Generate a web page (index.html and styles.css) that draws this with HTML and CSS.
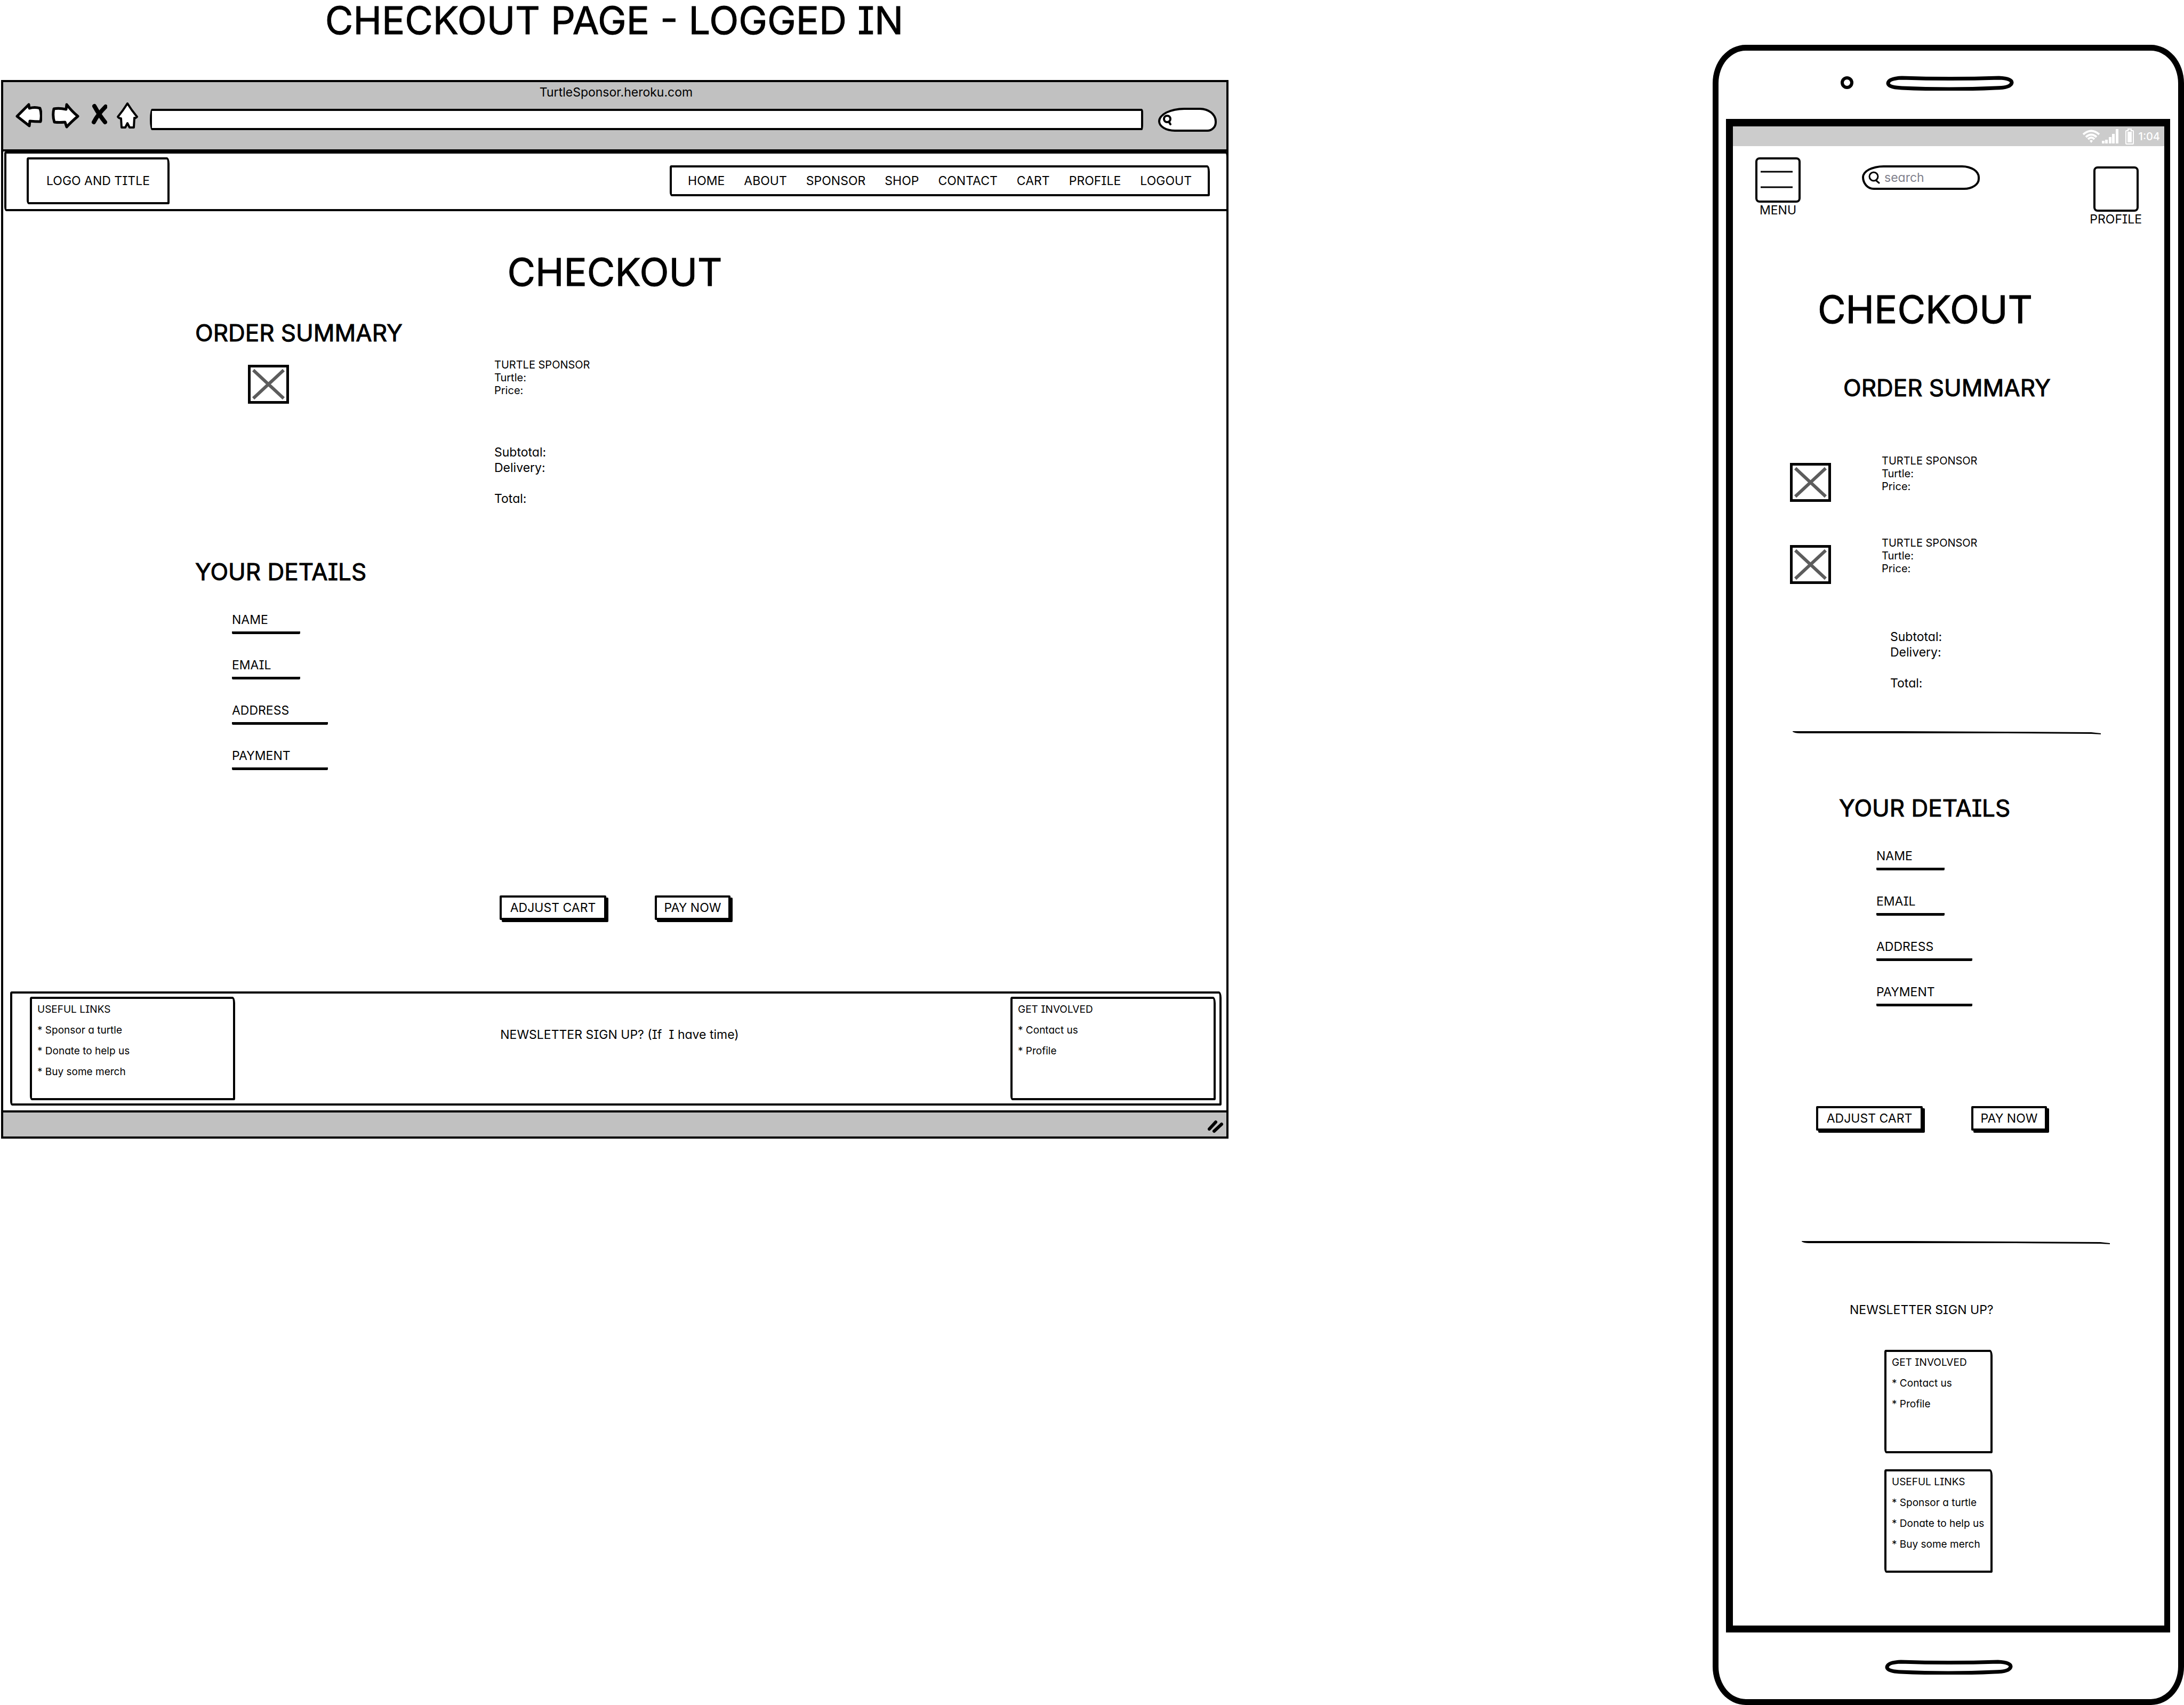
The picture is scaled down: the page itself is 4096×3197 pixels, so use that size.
FILE: index.html
```html
<!DOCTYPE html>
<html lang="en">
<head>
<meta charset="utf-8">
<title>Checkout page - logged in</title>
<link rel="stylesheet" href="styles.css">
</head>
<body>
<svg class="symbols" aria-hidden="true">
  <symbol id="placeholder" viewBox="0 0 67 63">
    <path d="M5 5 62 58M62 5 5 58" fill="none" stroke="#5c5c5c" stroke-width="6"/>
  </symbol>
  <symbol id="rule" viewBox="0 0 578 6" preserveAspectRatio="none">
    <path d="M0 0H200L400 1 560 2 578 4V6L560 5 400 4H14Q4 4 0 1Z" fill="#000"/>
  </symbol>
  <symbol id="pill" viewBox="0 0 240 28">
    <path d="M30 4Q120 7 212 4Q236 5 236 13Q234 23 205 23Q120 27 30 23Q4 22 4 14Q5 5 30 4Z" fill="#fff" stroke="#000" stroke-width="7"/>
  </symbol>
</svg>

<main class="board">
  <section class="desktop">
    <h1 class="title">CHECKOUT PAGE - LOGGED IN</h1>

    <div class="window">
      <div class="toolbar">
        <p class="window-title">TurtleSponsor.heroku.com</p>
        <div class="toolbar-row">
          <button class="icon-button" aria-label="Back">
            <svg width="50" height="66"><path d="M3 27 25 5 26 12Q36 9 46 12Q50 24 47 37Q36 37 27 36L26 45Z" fill="#fff" stroke="#000" stroke-width="5" stroke-linejoin="round"/></svg>
          </button>
          <button class="icon-button" aria-label="Forward">
            <svg width="52" height="66"><path d="M4 13Q14 11 27 14L28 5Q38 18 49 27Q36 38 28 47L25 38Q14 39 5 38Q1 26 4 13Z" fill="#fff" stroke="#000" stroke-width="5" stroke-linejoin="round"/></svg>
          </button>
          <button class="icon-button" aria-label="Stop">
            <svg width="34" height="66"><path d="M10 8Q20 26 30 38M31 9Q16 24 9 38" fill="none" stroke="#000" stroke-width="8" stroke-linecap="round"/></svg>
          </button>
          <button class="icon-button" aria-label="Home">
            <svg width="41" height="66"><path d="M20 3Q28 16 38 28Q36 31 33 30L32 48H24L20 40 16 48H9L8 31Q4 31 2 28Q12 16 20 3Z" fill="#fff" stroke="#000" stroke-width="4" stroke-linejoin="round"/></svg>
          </button>
          <input class="address" type="text" aria-label="Address">
          <label class="toolbar-search">
            <svg width="18" height="22"><circle cx="9" cy="10" r="6" fill="none" stroke="#000" stroke-width="4"/><path d="M12 15 15 20" stroke="#000" stroke-width="4" stroke-linecap="round"/></svg>
            <input type="search" aria-label="Search the web">
          </label>
        </div>
      </div>

      <header class="site-header sketch">
        <div class="logo sketch">LOGO AND TITLE</div>
        <nav class="site-nav sketch">
          <a href="#">HOME</a>
          <a href="#">ABOUT</a>
          <a href="#">SPONSOR</a>
          <a href="#">SHOP</a>
          <a href="#">CONTACT</a>
          <a href="#">CART</a>
          <a href="#">PROFILE</a>
          <a href="#">LOGOUT</a>
        </nav>
      </header>

      <div class="page">
        <h2 class="title page-title">CHECKOUT</h2>

        <h3 class="subtitle summary-title">ORDER SUMMARY</h3>
        <svg class="thumb"><use href="#placeholder"/></svg>
        <p class="item-text">TURTLE SPONSOR<br>Turtle:<br>Price:</p>
        <p class="totals">Subtotal:<br>Delivery:<br><br>Total:</p>

        <h3 class="subtitle details-title">YOUR DETAILS</h3>
        <form class="fields">
          <label class="field">NAME<input type="text" class="w-short"></label>
          <label class="field">EMAIL<input type="email" class="w-short"></label>
          <label class="field">ADDRESS<input type="text" class="w-long"></label>
          <label class="field">PAYMENT<input type="text" class="w-long"></label>
        </form>
        <div class="actions page-actions">
          <button class="button w-adjust">ADJUST CART</button>
          <button class="button w-pay">PAY NOW</button>
        </div>
      </div>

      <footer class="site-footer sketch">
        <section class="card sketch">
          <h4>USEFUL LINKS</h4>
          <a href="#">* Sponsor a turtle</a>
          <a href="#">* Donate to help us</a>
          <a href="#">* Buy some merch</a>
        </section>
        <p class="newsletter">NEWSLETTER SIGN UP? (If  I have time)</p>
        <section class="card sketch">
          <h4>GET INVOLVED</h4>
          <a href="#">* Contact us</a>
          <a href="#">* Profile</a>
        </section>
      </footer>

      <div class="statusbar">
        <svg width="30" height="26" aria-hidden="true"><path d="M3 17 15 4M12 21 26 8" stroke="#000" stroke-width="6" stroke-linecap="round"/></svg>
      </div>
    </div>
  </section>

  <section class="phone">
    <div class="phone-top">
      <svg width="24" height="26"><ellipse cx="12" cy="13" rx="9" ry="9" fill="#fff" stroke="#000" stroke-width="6"/></svg>
      <svg width="240" height="28"><use href="#pill"/></svg>
    </div>

    <div class="screen">
      <div class="phone-status">
        <svg width="34" height="26" viewBox="0 0 34 26"><g fill="none" stroke="#fff" stroke-width="4"><path d="M2 9Q17 -4 32 9"/><path d="M7 14Q17 5 27 14"/><path d="M11 18Q17 12 23 18"/></g><path d="M14 21Q17 18 20 21L17 25Z" fill="#fff"/></svg>
        <svg width="32" height="28" viewBox="0 0 32 28"><path d="M0 22h5v5H0zM6 20h5v7H6zM13 15h5v12h-5zM19 9h5v18h-5zM26 0h5v27h-5z" fill="#fff"/></svg>
        <svg class="battery" width="16" height="30" viewBox="0 0 16 30"><path d="M5 1h6v3h3q1 0 1 1v23q0 1-1 1H2q-1 0-1-1V5q0-1 1-1h3z" fill="none" stroke="#fff" stroke-width="2"/><path d="M4 6h8v20H4z" fill="#fff"/></svg>
        <span>1:04</span>
      </div>

      <header class="app-header">
        <button class="app-button">
          <svg width="85" height="85"><rect x="2" y="2" width="81" height="81" rx="6" fill="#fff" stroke="#000" stroke-width="4"/><path d="M10 27H70M10 56H70" stroke="#000" stroke-width="3"/></svg>
          MENU
        </button>
        <label class="app-search">
          <svg width="22" height="24"><circle cx="10" cy="10" r="8" fill="none" stroke="#000" stroke-width="3"/><path d="M14 17 20 22" stroke="#000" stroke-width="3" stroke-linecap="round"/></svg>
          <input type="search" placeholder="search" aria-label="Search">
        </label>
        <button class="app-button app-profile">
          <svg width="85" height="85"><rect x="2" y="2" width="81" height="81" rx="6" fill="#fff" stroke="#000" stroke-width="4"/></svg>
          PROFILE
        </button>
      </header>

      <div class="app-body">
        <h2 class="title app-title">CHECKOUT</h2>
        <h3 class="subtitle app-summary">ORDER SUMMARY</h3>
        <div class="app-items">
          <svg class="thumb"><use href="#placeholder"/></svg>
          <p class="item-text">TURTLE SPONSOR<br>Turtle:<br>Price:</p>
          <svg class="thumb"><use href="#placeholder"/></svg>
          <p class="item-text">TURTLE SPONSOR<br>Turtle:<br>Price:</p>
        </div>
        <p class="totals app-totals">Subtotal:<br>Delivery:<br><br>Total:</p>
        <svg class="rule rule-first"><use href="#rule"/></svg>

        <h3 class="subtitle app-details">YOUR DETAILS</h3>
        <form class="fields app-fields">
          <label class="field">NAME<input type="text" class="w-short"></label>
          <label class="field">EMAIL<input type="email" class="w-short"></label>
          <label class="field">ADDRESS<input type="text" class="w-long"></label>
          <label class="field">PAYMENT<input type="text" class="w-long"></label>
        </form>
        <div class="actions app-actions">
          <button class="button w-adjust">ADJUST CART</button>
          <button class="button w-pay">PAY NOW</button>
        </div>
        <svg class="rule rule-second"><use href="#rule"/></svg>

        <p class="app-newsletter">NEWSLETTER SIGN UP?</p>
        <div class="app-cards">
          <section class="card sketch">
            <h4>GET INVOLVED</h4>
            <a href="#">* Contact us</a>
            <a href="#">* Profile</a>
          </section>
          <section class="card sketch">
            <h4>USEFUL LINKS</h4>
            <a href="#">* Sponsor a turtle</a>
            <a href="#">* Donate to help us</a>
            <a href="#">* Buy some merch</a>
          </section>
        </div>
      </div>
    </div>

    <div class="phone-bottom">
      <svg width="240" height="28"><use href="#pill"/></svg>
    </div>
  </section>
</main>
</body>
</html>
```
FILE: styles.css
```css
* { box-sizing: border-box; margin: 0; padding: 0; }

body {
  background: #fff;
  color: #000;
  font: 23px/28px Inter, "Liberation Sans", sans-serif;
  font-feature-settings: "cv08", "cv11";
}

a { color: inherit; text-decoration: none; }
svg { display: block; flex: none; }
button, input { font: inherit; font-feature-settings: inherit; color: inherit; }
input { border: 0; background: none; outline: 0; min-width: 0; }
.symbols { position: absolute; width: 0; height: 0; }

.board {
  display: grid;
  grid-template-columns: 2304fr 884fr;
  column-gap: 22.168%;
  align-items: start;
}

.title { font-size: 72px; line-height: 88px; font-weight: 400; -webkit-text-stroke: 1px #000; }
.subtitle { font-size: 44px; line-height: 56px; font-weight: 400; -webkit-text-stroke: 1px #000; }
.sketch { border: 4px solid #000; border-radius: 3px 5px 2px 4px / 4px 12px 3px 8px; background: #fff; }

/* shared checkout parts */
.thumb { width: 77px; height: 73px; border: 5px solid #000; }
.item-text { font-size: 20px; line-height: 24px; }
.totals { line-height: 29px; }
.fields { display: flex; flex-direction: column; gap: 44px; }
.field { display: flex; flex-direction: column; align-items: flex-start; }
.field input { height: 13px; border-bottom: 5px solid #000; border-radius: 2px; }
.w-short { width: 128px; }
.w-long { width: 180px; }
.actions { display: flex; gap: 91px; }
.button {
  height: 46px;
  border: 4px solid #000;
  border-radius: 2px;
  background: #fff;
  box-shadow: 4px 4px 0 #000;
}
.w-adjust { width: 200px; }
.w-pay { width: 142px; }
.card { height: 194px; padding-left: 10px; font-size: 19px; line-height: 39px; display: flex; flex-direction: column; }
.card h4 { font: inherit; }

/* browser window */
.desktop > .title { line-height: 76px; text-align: center; margin-bottom: 74px; }
.window { margin-left: 2px; border: 4px solid #000; }
.toolbar { background: #c1c1c1; border-bottom: 4px solid #000; padding: 5px 18px 23px 23px; }
.window-title { text-align: center; margin-bottom: 4px; }
.toolbar-row { display: flex; align-items: center; gap: 18px; }
.icon-button { border: 0; background: none; }
.address {
  flex: 1;
  height: 40px;
  margin: 0 10px 0 3px;
  border: 4px solid #000;
  border-radius: 4px 3px 2px 4px / 20px 6px 12px 20px;
  background: #fff;
}
.toolbar-search {
  display: flex;
  align-items: center;
  width: 110px;
  height: 45px;
  padding-left: 4px;
  border: 4px solid #000;
  border-radius: 50px 32px 18px 32px / 26px 26px 18px 20px;
  background: #fff;
}
.toolbar-search input { width: 60px; }

.site-header {
  display: flex;
  align-items: center;
  justify-content: space-between;
  height: 112px;
  margin: 0 -4px 0 2px;
  padding: 0 31px 3px 38px;
}
.logo { width: 268px; line-height: 80px; text-align: center; }
.site-nav { display: flex; gap: 36px; padding: 0 30px; line-height: 50px; }

.page {
  display: grid;
  grid-template-columns: 360fr 99fr 462fr 10fr 1363fr;
  justify-items: start;
  padding: 70px 0 134px;
}
.page-title { grid-column: 1 / -1; justify-self: center; }
.summary-title { grid-column: 2 / 4; margin: 42px 0 20px; }
.page .thumb { grid-column: 3; margin-top: 12px; }
.page .item-text { grid-column: 4 / 6; }
.page .totals { grid-column: 4 / 6; margin-top: 77px; }
.details-title { grid-column: 2 / 4; margin: 94px 0 48px; }
.page .fields { grid-column: 2 / 4; padding-left: 69px; }
.page-actions { grid-column: 5; grid-row: 7; margin-top: 235px; }

.site-footer {
  display: flex;
  justify-content: space-between;
  margin: 0 9px 9px 13px;
  padding: 6px 7px 6px 33px;
}
.site-footer .card { width: 385px; }
.newsletter { margin: 57px 12px 0 0; white-space: pre; }
.statusbar {
  display: flex;
  justify-content: flex-end;
  height: 49px;
  padding: 14px 5px 0 0;
  border-top: 4px solid #000;
  background: #c1c1c1;
}

/* phone */
.phone { margin-top: 84px; border: 11px solid #000; border-radius: 62px / 72px; }
.phone-top { display: flex; gap: 61px; height: 128px; padding: 47px 0 0 229px; }
.phone-bottom { height: 125px; padding: 51px 0 0 312px; }
.screen { margin: 0 15px 0 14px; border: solid #000; border-width: 14px 11px 13px 13px; }
.phone-status {
  display: flex;
  align-items: center;
  height: 37px;
  padding-right: 8px;
  justify-content: flex-end;
  gap: 3px;
  background: #ccc;
  color: #fff;
  font-size: 20px;
  font-weight: 500;
}
.battery { margin: 0 6px 0 9px; }

.app-header { display: flex; align-items: flex-start; padding: 21px 42px 0 42px; }
.app-button { display: flex; flex-direction: column; align-items: center; border: 0; background: none; }
.app-profile { margin: 17px 0 0 auto; }
.app-search {
  display: flex;
  align-items: center;
  gap: 8px;
  width: 221px;
  height: 46px;
  margin: 15px 0 0 115px;
  padding-left: 8px;
  border: 4px solid #000;
  border-radius: 44px 36px 32px 24px / 24px 24px 22px 26px;
}
.app-search input { width: 150px; }
.app-search input::placeholder { color: #80808c; opacity: 1; }

.app-body { display: flex; flex-direction: column; align-items: flex-start; padding: 111px 0 99px; }
.app-title { margin-left: 159px; }
.app-summary { margin: 75px 0 97px 207px; }
.app-items { display: grid; grid-template-columns: 172px auto; row-gap: 65px; margin-left: 107px; }
.app-items .thumb { margin-top: 16px; }
.app-totals { margin: 85px 0 75px 295px; }
.rule { width: 578px; height: 6px; }
.rule-first { margin-left: 112px; }
.app-details { margin: 110px 0 48px 199px; }
.app-fields { margin-left: 269px; }
.app-actions { margin: 187px 0 207px 156px; }
.rule-second { margin-left: 129px; }
.app-newsletter { margin: 109px 0 61px 219px; }
.app-cards { display: grid; gap: 30px; margin-left: 284px; }
.app-cards .card { width: 203px; }
```
